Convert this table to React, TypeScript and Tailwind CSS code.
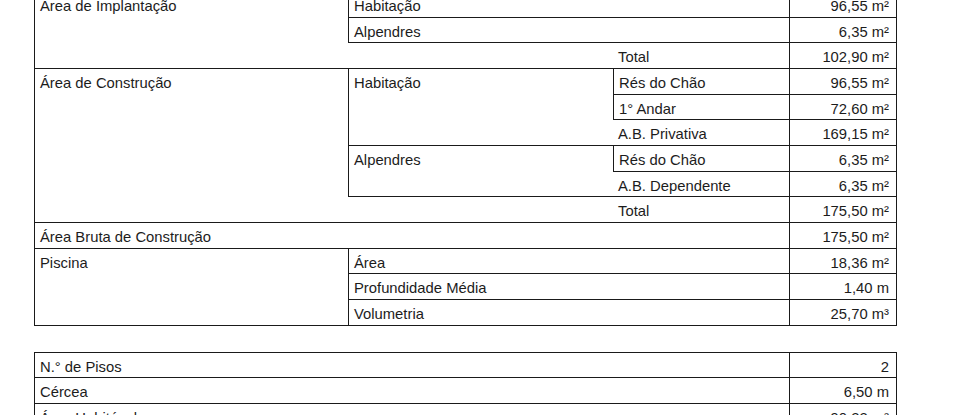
import React from "react";

type CellProps = {
  className: string;
  children?: React.ReactNode;
  value?: boolean;
};

function Cell({ className, children, value }: CellProps) {
  return (
    <div
      className={
        (value
          ? "border-l border-r border-b border-[#1a1a1a] text-right pr-[7px] "
          : "pl-[5px] ") +
        "pt-[6px] leading-[17px] whitespace-nowrap overflow-hidden " +
        className
      }
    >
      {children}
    </div>
  );
}

export default function App() {
  return (
    <div
      className="w-[960px] h-[415px] overflow-hidden bg-white text-[#1c1c1c] text-[14.8px]"
      style={{ fontFamily: '"Liberation Sans", Arial, sans-serif' }}
    >
      <div className="ml-[34px] mt-[-8px] w-[863px] grid grid-cols-[314px_265px_176px_108px] auto-rows-[25.67px]">
        {/* Área de Implantação */}
        <Cell className="col-start-1 row-start-1 row-span-3 border-l border-b border-[#1a1a1a]">
          Área de Implantação
        </Cell>
        <Cell className="col-start-2 col-span-2 row-start-1 border-l border-b border-[#1a1a1a]">
          Habitação
        </Cell>
        <Cell value className="col-start-4 row-start-1">
          96,55 m²
        </Cell>
        <Cell className="col-start-2 col-span-2 row-start-2 border-l border-b border-[#1a1a1a]">
          Alpendres
        </Cell>
        <Cell value className="col-start-4 row-start-2">
          6,35 m²
        </Cell>
        <Cell className="col-start-2 row-start-3 border-b border-[#1a1a1a]" />
        <Cell className="col-start-3 row-start-3 border-b border-[#1a1a1a]">
          Total
        </Cell>
        <Cell value className="col-start-4 row-start-3">
          102,90 m²
        </Cell>

        {/* Área de Construção */}
        <Cell className="col-start-1 row-start-4 row-span-6 border-l border-b border-[#1a1a1a]">
          Área de Construção
        </Cell>
        <Cell className="col-start-2 row-start-4 row-span-3 border-l border-b border-[#1a1a1a]">
          Habitação
        </Cell>
        <Cell className="col-start-3 row-start-4 border-l border-b border-[#1a1a1a]">
          Rés do Chão
        </Cell>
        <Cell value className="col-start-4 row-start-4">
          96,55 m²
        </Cell>
        <Cell className="col-start-3 row-start-5 border-l border-b border-[#1a1a1a]">
          1° Andar
        </Cell>
        <Cell value className="col-start-4 row-start-5">
          72,60 m²
        </Cell>
        <Cell className="col-start-3 row-start-6 border-b border-[#1a1a1a]">
          A.B. Privativa
        </Cell>
        <Cell value className="col-start-4 row-start-6">
          169,15 m²
        </Cell>
        <Cell className="col-start-2 row-start-7 row-span-2 border-l border-b border-[#1a1a1a]">
          Alpendres
        </Cell>
        <Cell className="col-start-3 row-start-7 border-l border-b border-[#1a1a1a]">
          Rés do Chão
        </Cell>
        <Cell value className="col-start-4 row-start-7">
          6,35 m²
        </Cell>
        <Cell className="col-start-3 row-start-8 border-b border-[#1a1a1a]">
          A.B. Dependente
        </Cell>
        <Cell value className="col-start-4 row-start-8">
          6,35 m²
        </Cell>
        <Cell className="col-start-2 row-start-9 border-b border-[#1a1a1a]" />
        <Cell className="col-start-3 row-start-9 border-b border-[#1a1a1a]">
          Total
        </Cell>
        <Cell value className="col-start-4 row-start-9">
          175,50 m²
        </Cell>

        {/* Área Bruta */}
        <Cell className="col-start-1 col-span-3 row-start-10 border-l border-b border-[#1a1a1a]">
          Área Bruta de Construção
        </Cell>
        <Cell value className="col-start-4 row-start-10">
          175,50 m²
        </Cell>

        {/* Piscina */}
        <Cell className="col-start-1 row-start-11 row-span-3 border-l border-b border-[#1a1a1a]">
          Piscina
        </Cell>
        <Cell className="col-start-2 col-span-2 row-start-11 border-l border-b border-[#1a1a1a]">
          Área
        </Cell>
        <Cell value className="col-start-4 row-start-11">
          18,36 m²
        </Cell>
        <Cell className="col-start-2 col-span-2 row-start-12 border-l border-b border-[#1a1a1a]">
          Profundidade Média
        </Cell>
        <Cell value className="col-start-4 row-start-12">
          1,40 m
        </Cell>
        <Cell className="col-start-2 col-span-2 row-start-13 border-l border-b border-[#1a1a1a]">
          Volumetria
        </Cell>
        <Cell value className="col-start-4 row-start-13">
          25,70 m³
        </Cell>
      </div>

      <div className="ml-[34px] mt-[26px] w-[863px] grid grid-cols-[755px_108px] auto-rows-[25.67px] border-t border-[#1a1a1a]">
        <Cell className="border-l border-b border-[#1a1a1a]">N.° de Pisos</Cell>
        <Cell value className="">2</Cell>
        <Cell className="border-l border-b border-[#1a1a1a]">Cércea</Cell>
        <Cell value className="">6,50 m</Cell>
        <Cell className="border-l border-b border-[#1a1a1a]">Área Habitável</Cell>
        <Cell value className="">90,22 m²</Cell>
      </div>
    </div>
  );
}
